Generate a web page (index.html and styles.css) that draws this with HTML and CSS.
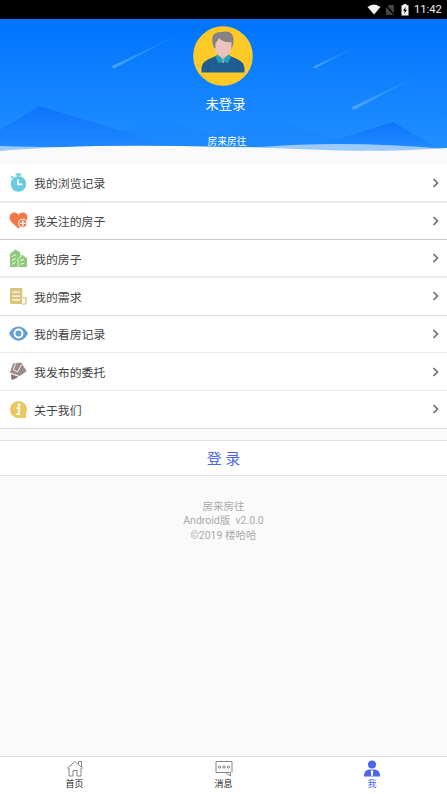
FILE: index.html
```html
<!DOCTYPE html>
<html lang="zh-CN">
<head>
<meta charset="utf-8">
<title>我</title>
<link rel="stylesheet" href="styles.css">
</head>
<body>
<div class="status">
  <svg class="wifi" width="14" height="11" viewBox="0 0 14 11"><path d="M.5 3Q7-2 13.500 3L7 10.600Z" fill="#f4f4f4"/></svg>
  <svg class="sim" width="10" height="12" viewBox="0 0 10 12"><path d="M3.500 1H9V11H1V4Z" fill="#444"/><path d="M.5 1L9.500 11" stroke="#000" stroke-width="1.300"/></svg>
  <svg class="battery" width="8" height="12" viewBox="0 0 8 12"><path d="M2.500 0h3v1.300H7.500V11.500H.5V1.300h2Z" fill="#f4f4f4"/><path d="M4.800 2.700L2 6.800h1.700L3.200 10 6 5.800H4.300Z" fill="#000"/></svg>
  <span class="time">11:42</span>
</div>
<header class="hero">
  <svg class="scene" width="447" height="145" viewBox="0 19 447 145">
    <defs>
      <linearGradient id="sky" x2="0" y2="1"><stop offset=".05" stop-color="#0075ff"/><stop offset=".9" stop-color="#238fff"/></linearGradient>
      <linearGradient id="hill" x2="0" y2="1"><stop stop-color="#0e73fc"/><stop offset="1" stop-color="#208bff"/></linearGradient>
      <linearGradient id="trail" x1="0" y1="1" x2="1" y2="0"><stop stop-color="#55b2ff" stop-opacity=".8"/><stop offset="1" stop-color="#3da0ff" stop-opacity=".1"/></linearGradient>
    </defs>
    <path d="M0 19H447V164H0Z" fill="url(#sky)"/>
    <path d="M112 66L182 33L115 68Q112 69 112 66Z" fill="url(#trail)"/>
    <path d="M313.500 66.500L361 44L316 68Q313.500 68.500 313.500 66.500Z" fill="url(#trail)"/>
    <path d="M352 107L425 72L355 109.500Q352 110 352 107Z" fill="url(#trail)"/>
    <path d="M100 148L145 115L215 135L260 115L345 142V150H100Z" fill="#1783fc" opacity=".45"/>
    <path d="M0 130L39 106L155 141V152H0Z" fill="url(#hill)"/>
    <path d="M322 144L393 122L438 148H322Z" fill="url(#hill)"/>
    <path d="M0 146Q65 148 100 146L260 147Q345 140 447 149V164H0Z" fill="#9ccafa"/>
    <path d="M0 151Q90 143 220 147C300 147 350 155 447 148V164H0Z" fill="#fafafa"/>
  </svg>
  <svg class="avatar" width="60" height="60" viewBox="0 0 60 60">
    <circle cx="30" cy="30" r="29.800" fill="#ffca28"/>
    <path d="M8.500 46.500V42Q9 36 16 33L25 29H35L44 33Q51 36 51.500 42V46.500Z" fill="#205e91"/>
    <path d="M25 28h10v4l-5 5-5-5Z" fill="#dcafad"/>
    <path d="M22.500 31L25 28 30 34 35 28 38 31 34.500 37.500 30 34.500 26 37.500Z" fill="#22a3bd"/>
    <path d="M21 16Q21 6 30 6t9 10v5Q36 31 30 31T21 21Z" fill="#eac2bf"/>
    <path d="M21 22Q15 6 28 6Q43 3 40 19L38.500 23V16Q30 17 26 12Q24 16 22.500 17V22Z" fill="#858282"/>
    <path d="M15 40v6M45 40v6" stroke="#174d7c" stroke-width=".7"/>
  </svg>
  <div class="name">未登录</div>
  <div class="brand">房来房往</div>
</header>
<main>
  <nav class="list">
    <a class="row thick"><svg class="icon" viewBox="0 0 20 20"><circle cx="10" cy="11.500" r="8.200" fill="#6bc9e0"/><path d="M7 .5h6v2H7ZM9 2h2v2H9ZM2 4l2-1 1 2-2 1Z" fill="#6bc9e0"/><path d="M9.500 6.500V12H14" fill="none" stroke="#fff" stroke-width="1.700"/></svg><span>我的浏览记录</span><svg class="arrow" viewBox="0 0 7 10"><path d="M1.500 1L5.500 5 1.500 9"/></svg></a>
    <a class="row dark"><svg class="icon" viewBox="0 0 20 20"><path d="M10 4.200C7-.5 0 1.500 .7 7.500 1.200 12 7 15 10 18.500 13 15 18.800 12 19.300 7.500 20 1.500 13 -.5 10 4.200Z" fill="#f27849"/><circle cx="14.500" cy="13" r="4.300" fill="#f27849" stroke="#fff"/><path d="M14.500 10v6M11.500 13h6" stroke="#fff" stroke-width="1.500"/></svg><span>我关注的房子</span><svg class="arrow" viewBox="0 0 7 10"><path d="M1.500 1L5.500 5 1.500 9"/></svg></a>
    <a class="row thick"><svg class="icon" viewBox="0 0 20 20"><path d="M1 5L7 .5 12 4V19H1ZM10 9l4-3 5 4v9h-9Z" fill="#8ccb79"/><path d="M9.500 19V10l4-3" fill="none" stroke="#fff" stroke-width=".8"/><path d="M3 8l4-2M3 12l4-2M3 16l4-2M12 12l4-1M12 16l4-1" stroke="#fff" stroke-width="1"/></svg><span>我的房子</span><svg class="arrow" viewBox="0 0 7 10"><path d="M1.500 1L5.500 5 1.500 9"/></svg></a>
    <a class="row"><svg class="icon" viewBox="0 0 20 20"><path d="M2 1H14V18H3Q1 18 1 16V2Q1 1 2 1Z" fill="#ddc27b"/><path d="M14 11.500h4V16q0 2-2 2h-2" fill="#fff" stroke="#ddc27b" stroke-width="1.300"/><path d="M3.500 5.500h8M3.500 9.500h8M3.500 13.500h8" stroke="#fff" stroke-width="1.300"/></svg><span>我的需求</span><svg class="arrow" viewBox="0 0 7 10"><path d="M1.500 1L5.500 5 1.500 9"/></svg></a>
    <a class="row light"><svg class="icon" viewBox="0 0 20 20"><path d="M0 10Q4 2.500 10 2.500T20 10Q16 17.500 10 17.500T0 10Z" fill="#649fd2"/><circle cx="10" cy="10" r="4.200" fill="none" stroke="#fff" stroke-width="2"/></svg><span>我的看房记录</span><svg class="arrow" viewBox="0 0 7 10"><path d="M1.500 1L5.500 5 1.500 9"/></svg></a>
    <a class="row light"><svg class="icon" viewBox="0 0 20 20"><path d="M4.500 2L12.500 1 18 9.500 11 14.500 1.500 11Z" fill="#9a8b88" stroke="#9a8b88" stroke-linejoin="round"/><path d="M2 12.500L10.500 15.500 3.500 19 2.500 18Z" fill="#857673"/><path d="M1 11.800L11 15.200M7 1.500L4.500 8 9 10.500 13 3" fill="none" stroke="#fff" stroke-width=".9"/></svg><span>我发布的委托</span><svg class="arrow" viewBox="0 0 7 10"><path d="M1.500 1L5.500 5 1.500 9"/></svg></a>
    <a class="row"><svg class="icon" viewBox="0 0 20 20"><circle cx="10" cy="10" r="9" fill="#ebc764"/><path d="M11 15h7v4h-8Z" fill="#ebc764"/><circle cx="10.500" cy="5.300" r="1.500" fill="#fff"/><path d="M8 8.500h3l-1 6.500h2M7.800 15h3" fill="none" stroke="#fff" stroke-width="1.700"/></svg><span>关于我们</span><svg class="arrow" viewBox="0 0 7 10"><path d="M1.500 1L5.500 5 1.500 9"/></svg></a>
  </nav>
  <button class="login">登 录</button>
  <div class="about">房来房往<br>Android版&nbsp; v2.0.0<br>©2019 楼哈哈</div>
</main>
<footer class="tabs">
  <a class="tab"><svg width="18" height="17" viewBox="0 0 18 17"><path d="M1 8.500L9 1.500 17 8.500M3 8V16H7V10.500h4V16h4V8M12.500 4V1.500h3V7" fill="none" stroke="#777" stroke-width=".9"/></svg><span>首页</span></a>
  <a class="tab"><svg width="18" height="17" viewBox="0 0 18 17"><path d="M11.500 12.500H1V1.500H17V12.500M11.500 13.500l4 2.500v-3.500H11" fill="none" stroke="#777" stroke-width=".9"/><g fill="none" stroke="#777" stroke-width=".9"><circle cx="4.500" cy="7" r="1.200"/><circle cx="9" cy="7" r="1.200"/><circle cx="13.500" cy="7" r="1.200"/></g></svg><span>消息</span></a>
  <a class="tab active"><svg width="18" height="17" viewBox="0 0 18 17"><circle cx="9" cy="4.500" r="4" fill="#4b68ed"/><path d="M1 16.500Q1 10 6 9.500h6Q17 10 17 16.500Z" fill="#4b68ed"/><path d="M9 9.500l1.200 2-.4 4-.8 1-.8-1-.4-4Z" fill="#fff"/></svg><span>我</span></a>
</footer>
</body>
</html>
```
FILE: styles.css
```css
* { box-sizing: border-box; }
body {
  margin: 0;
  height: 794px;
  display: flex;
  flex-direction: column;
  overflow: hidden;
  background: #fafafa;
  color: #444;
  font-family: Roboto, "Noto Sans CJK SC", sans-serif;
}
svg { display: block; flex: none; }
.status {
  height: 19px;
  flex: none;
  background: #000;
  color: #eee;
  display: flex;
  align-items: center;
  justify-content: flex-end;
  padding-right: 5px;
}
.sim { margin-left: 4px; }
.battery { margin-left: 6px; }
.time { margin-left: 5px; width: 28px; white-space: nowrap; font-size: 11.200px; }
.hero {
  position: relative;
  height: 145px;
  flex: none;
  display: flex;
  flex-direction: column;
  align-items: center;
  padding-top: 7px;
  color: #fff;
}
.scene { position: absolute; inset: 0; }
.avatar, .name, .brand { position: relative; }
.avatar { margin-right: 1px; }
.name { margin-top: 9px; padding-left: 4px; font-size: 13.300px; line-height: 20px; }
.brand { margin-top: 19px; padding-left: 7px; font-size: 9.800px; line-height: 16px; }
main { flex: 1; }
.list { display: block; background: #fff; }
.row {
  height: 37.700px;
  display: flex;
  align-items: center;
  border-bottom: 1px solid #dcdcdc;
  padding: 0 8px 0 9px;
  font-size: 11.900px;
}
.row:first-child { height: 38.500px; padding-top: 1px; }
.thick { border-bottom: 2px solid #ebebeb; }
.dark { border-bottom-color: #c8c8c8; }
.light { border-bottom-color: #e9e9e9; }
.row span { margin-left: 6px; flex: 1; }
.icon { width: 19px; height: 19px; }
.arrow { width: 7px; height: 10px; fill: none; stroke: #707070; stroke-width: 1.700; }
.login {
  display: block;
  width: 100%;
  height: 36px;
  margin-top: 11.300px;
  padding: 0;
  border: solid #e2e2e2;
  border-width: 1px 0;
  background: #fff;
  color: #4b68ed;
  font: 15px/36px Roboto, "Noto Sans CJK SC", sans-serif;
}
.about {
  margin-top: 24px;
  text-align: center;
  color: #aaa;
  font-size: 10.500px;
  line-height: 14.400px;
}
.tabs {
  height: 38px;
  flex: none;
  display: grid;
  grid-template-columns: repeat(3, 1fr);
  border-top: 1px solid #dadada;
  background: #fff;
}
.tab {
  display: flex;
  flex-direction: column;
  align-items: center;
  padding-top: 3px;
  color: #222;
  font-size: 9px;
  line-height: 14px;
}
.active { color: #4b68ed; padding-right: 1px; }
```
